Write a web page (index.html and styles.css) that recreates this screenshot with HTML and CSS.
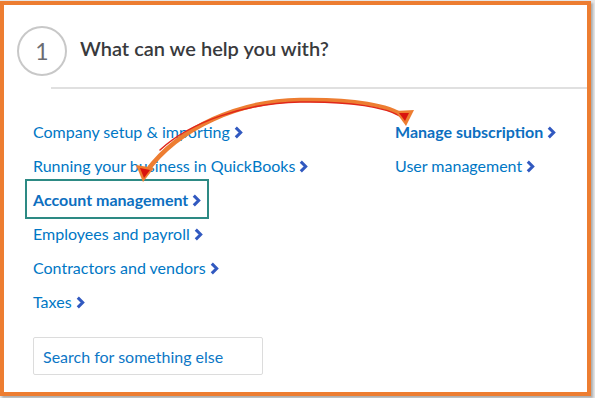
FILE: index.html
```html
<!DOCTYPE html>
<html lang="en">
<head>
    <meta charset="UTF-8">
    <title>What can we help you with?</title>
    <link rel="stylesheet" href="styles.css">
</head>
<body>
    <div class="frame">
        <div class="header">
            <div class="step">1</div>
            <h2>What can we help you with?</h2>
        </div>
        <div class="divider"></div>

        <div class="topics">
            <div class="col">
                <a class="link" href="#">Company setup &amp; importing <svg class="chev" viewBox="0 0 8 12"><polyline points="1.5,1.5 6,6 1.5,10.5"/></svg></a>
                <a class="link" href="#">Running your business in QuickBooks <svg class="chev" viewBox="0 0 8 12"><polyline points="1.5,1.5 6,6 1.5,10.5"/></svg></a>
                <a class="link bold boxed" href="#">Account management <svg class="chev" viewBox="0 0 8 12"><polyline points="1.5,1.5 6,6 1.5,10.5"/></svg></a>
                <a class="link" href="#">Employees and payroll <svg class="chev" viewBox="0 0 8 12"><polyline points="1.5,1.5 6,6 1.5,10.5"/></svg></a>
                <a class="link" href="#">Contractors and vendors <svg class="chev" viewBox="0 0 8 12"><polyline points="1.5,1.5 6,6 1.5,10.5"/></svg></a>
                <a class="link" href="#">Taxes <svg class="chev" viewBox="0 0 8 12"><polyline points="1.5,1.5 6,6 1.5,10.5"/></svg></a>
            </div>
            <div class="col right">
                <a class="link bold" href="#">Manage subscription <svg class="chev" viewBox="0 0 8 12"><polyline points="1.5,1.5 6,6 1.5,10.5"/></svg></a>
                <a class="link" href="#">User management <svg class="chev" viewBox="0 0 8 12"><polyline points="1.5,1.5 6,6 1.5,10.5"/></svg></a>
            </div>
        </div>

        <div class="search">Search for something else</div>

        <!-- hand drawn arrow over the links -->
        <svg class="arrow" width="595" height="398" viewBox="0 0 595 398">
            <path d="M146 172 C 180 126, 240 101, 300 100 C 355 99, 390 106, 403 116" fill="none" stroke="#ed7d31" stroke-width="4.5" stroke-linecap="round"/>
            <path d="M160 150 C 190 122, 245 103, 300 102 C 352 101, 386 108, 400 116" fill="none" stroke="#e0261b" stroke-width="1.5" stroke-linecap="round"/>
            <polygon points="136,165 154,168 143,182" fill="#ed7d31"/>
            <polygon points="140,168 150,170 144,178" fill="#d9140f"/>
            <polygon points="395,111 414,110 406,126" fill="#ed7d31"/>
            <polygon points="399,113 409,113 405,121" fill="#d9140f"/>
        </svg>
    </div>
</body>
</html>
```

FILE: styles.css
```css
body {
    margin: 0;
    background: #e6e6e6;
    font-family: 'Lato', sans-serif;
    height: 398px;
    overflow: hidden;
}
.frame {
    position: relative;
    width: 583px;
    height: 387px;
    margin-top: 1px;
    background: #fff;
    border: 4px solid #ed7d31;
    box-shadow: 2px 2px 2px rgba(0, 0, 0, 0.25);
}
.header {
    display: flex;
    align-items: center;
    padding: 21px 0 0 13px;
    gap: 15px;
}
.step {
    width: 46px;
    height: 46px;
    border: 2px solid #c8c8c8;
    border-radius: 50%;
    display: flex;
    align-items: center;
    justify-content: center;
    font-size: 23px;
    color: #6b6c72;
}
h2 {
    margin: 0 0 7px -2px;
    font-size: 20px;
    font-weight: 600;
    color: #393a3d;
}
.divider {
    margin: 11px 0 0 47px;
    height: 2px;
    background: #e0e0e0;
}
.topics {
    display: flex;
    padding: 32px 0 0 29px;
}
.col {
    flex: none;
    display: flex;
    flex-direction: column;
    align-items: flex-start;
    gap: 14px;
    width: 362px;
}
.col.right {
    width: auto;
}
.link {
    display: flex;
    align-items: center;
    gap: 4px;
    height: 20px;
    font-size: 16px;
    color: #0077c5;
    text-decoration: none;
}
.bold {
    font-weight: 700;
    color: #0d6fc0;
}
.boxed {
    margin-left: -8px;
    padding: 8px 6px 8px 6px;
    margin-top: -10px;
    margin-bottom: -10px;
    border: 2px solid #2d8a84;
}
.chev {
    width: 9px;
    height: 13px;
    margin-top: 2px;
}
.chev polyline {
    fill: none;
    stroke: #3159c0;
    stroke-width: 2.8;
}
.search {
    margin: 26px 0 0 29px;
    width: 219px;
    height: 36px;
    padding-left: 9px;
    border: 1px solid #dcdcdc;
    border-radius: 2px;
    font-size: 16px;
    color: #0d77c6;
    line-height: 37px;
}
.arrow {
    position: absolute;
    left: -4px;
    top: -5px;
    pointer-events: none;
}
```
